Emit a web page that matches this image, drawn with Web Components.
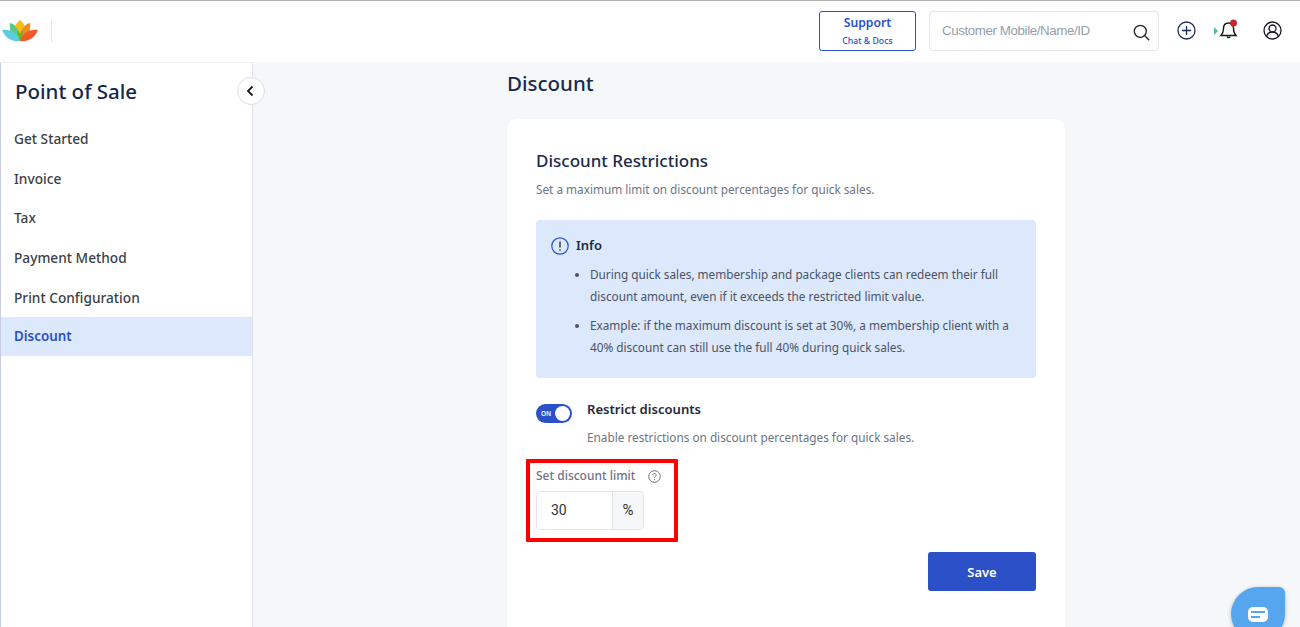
<!DOCTYPE html>
<html><head><meta charset="utf-8"><style>
html,body{margin:0;height:627px;overflow:hidden;background:#f6f7f9;font-family:"Noto Sans",sans-serif}
pos-app{display:block}
</style></head><body>
<pos-app></pos-app>
<script>
function def(name,html){customElements.define(name,class extends HTMLElement{constructor(){super();this.attachShadow({mode:'open'}).innerHTML=html}})}
def('top-bar',`<style>
:host{display:flex;align-items:center;height:62px;box-sizing:border-box;border-top:1px solid #b0b0b0;background:#fff;padding:0 18px 2px 2px}
.logo{width:36px;height:22px}
.sep{width:1px;height:22px;background:#e3e5e8;margin-left:13px}
.sp{flex:1}
.support{width:97px;height:40px;box-sizing:border-box;border:1px solid #2a50c8;border-radius:3px;display:flex;flex-direction:column;align-items:center;color:#2b50c8;margin-right:13px}
.support b{font:600 12.200px/16px "Noto Sans",sans-serif;margin-top:3px}
.support span{font:500 8.700px/12px "Noto Sans",sans-serif;margin-top:4px}
.search{width:230px;height:40px;box-sizing:border-box;border:1px solid #e2e4ea;border-radius:4px;display:flex;align-items:center;padding:0 12px;font:13.330px "Liberation Sans",sans-serif;letter-spacing:-.4px;color:#96a0ab;justify-content:space-between;margin-right:18px}
svg{display:block}
</style>
<svg class="logo" viewBox="0 0 36 22"><path d="M18 21C11 20 9 7 18 0c9 7 7 20 0 21z" fill="#f5bd16"/><path d="M18 21C9 21 7 9 8 3c5 1 10 6 10 18z" fill="#5dcb86"/><path d="M18 21C27 21 29 9 28 3c-5 1-10 6-10 18z" fill="#f28a26"/><path d="M18 21c-2-4-3-8-3-11 2 2 3 3 3 4 0-1 1-2 3-4 0 3-1 7-3 11z" fill="#6bb31e"/><path d="M18 21C10 22 3 18 0 10c8-1 15 2 18 11z" fill="#5ccde0"/><path d="M18 21c8 1 15-3 18-11-8-1-15 2-18 11z" fill="#ee5a2b"/></svg>
<div class="sep"></div><div class="sp"></div>
<div class="support"><b>Support</b><span>Chat &amp; Docs</span></div>
<div class="search"><span>Customer Mobile/Name/ID</span><svg width="17" height="17" viewBox="0 0 17 17" fill="none" stroke="#222" stroke-width="1.300" style="margin:3px -4px 0 0"><circle cx="7.300" cy="7.300" r="6"/><path d="M11.800 11.800l4.400 4.400"/></svg></div>
<svg width="19" height="19" viewBox="0 0 19 19" fill="none" stroke="#1d2b50" stroke-width="1.300"><circle cx="9.500" cy="9.500" r="8.500"/><path d="M9.500 5v9M5 9.500h9"/></svg>
<svg width="4" height="8" viewBox="0 0 4 8" style="margin-left:18px"><path d="M0 0l4 4-4 4z" fill="#4fc08a"/></svg>
<svg width="20" height="21" viewBox="0 0 20 21" fill="none" stroke="#15181d" stroke-width="1.400" style="margin:-3px 0 0 1px"><path d="M2 16.500c2-2 2.500-3.500 2.500-7 0-3.500 2-5.500 5-5.500s5 2 5 5.500c0 3.500.5 5 2.500 7z"/><path d="M8 17.500c.4 1.500 2.600 1.500 3 0"/><circle cx="14.500" cy="4" r="3.500" fill="#c1272d" stroke="none"/></svg>
<svg width="19" height="19" viewBox="0 0 19 19" fill="none" stroke="#15181d" stroke-width="1.300" style="margin-left:24px"><circle cx="9.500" cy="9.500" r="8.500"/><circle cx="9.500" cy="7.500" r="3.500"/><path d="M3.500 15.500c1-3 3.500-4.500 6-4.500s5 1.500 6 4.500"/></svg>`);
def('side-nav',`<style>
:host{display:block;width:253px;box-sizing:border-box;height:565px;background:#fff;border-right:1px solid #dfe2e8;border-left:1px solid #c6cde0;position:relative;flex:none;border-top:1px solid #eef0f3}
h1{margin:0;font:500 20.500px/28px "Noto Sans",sans-serif;color:#16264a;padding:14px 14px 0;height:56.200px;box-sizing:border-box}
.t{position:absolute;left:236px;top:14px;width:28px;height:28px;box-sizing:border-box;border:1px solid #dcdfe4;border-radius:50%;background:#fff;display:flex;align-items:center;justify-content:center;padding-right:2px}
</style><h1>Point of Sale</h1><slot></slot>
<div class="t"><svg width="8" height="12" viewBox="0 0 8 12" fill="none" stroke="#16181d" stroke-width="1.800"><path d="M6.500 1.500L2 6l4.500 4.500"/></svg></div>`);
def('nav-item',`<style>
:host{display:block;height:39.600px;padding-left:13px;font:500 13.700px/39px "Noto Sans",sans-serif;color:#3b3f46}
:host([active]){background:#dce8fc;color:#2b50c8;font-weight:600;font-size:13.400px;height:39px}
</style><slot></slot>`);
def('info-box',`<style>
:host{display:block;height:158px;box-sizing:border-box;background:#dce8fc;border-radius:4px;padding:15px 16px 0 15px;margin-top:22px}
.h{display:flex;align-items:center;gap:7px;font:600 13px/21px "Noto Sans",sans-serif;color:#1f2a44}
ul{margin:8px 0 0;padding:0 0 0 39px;font:11.770px/21.700px "Noto Sans",sans-serif;color:#4c5364}
::slotted(li){margin-bottom:8px}
</style><div class="h"><svg width="18" height="18" viewBox="0 0 18 18" fill="none" stroke="#2b50c8" stroke-width="1.200"><circle cx="9" cy="9" r="8.200"/><path d="M9 4.500v6M9 12.200v1.500" stroke="#1a2440" stroke-width="1.300"/></svg>Info</div><ul><slot></slot></ul>`);
def('toggle-row',`<style>
:host{display:flex;gap:15px;margin-top:22px}
.sw{width:36px;height:19px;background:#2b50c8;border-radius:10px;position:relative;margin-top:4px;flex:none}
.sw i{position:absolute;right:2px;top:2px;width:15px;height:15px;background:#fff;border-radius:50%}
.sw span{position:absolute;left:5px;top:5px;font:600 6.500px/9px "Noto Sans",sans-serif;color:#fff}
b{display:block;font:600 13.100px/18px "Noto Sans",sans-serif;color:#23293a}
p{margin:10px 0 0;font:11.770px/18px "Noto Sans",sans-serif;color:#6c7585}
</style><div class="sw"><span>ON</span><i></i></div><div><b>Restrict discounts</b><p>Enable restrictions on discount percentages for quick sales.</p></div>`);
def('limit-field',`<style>
:host{display:block;width:152px;height:83px;box-sizing:border-box;border:4px solid #f00;margin:13px 0 0 -10px;padding:4px 0 0 6px;border-radius:1px}
.l{display:flex;align-items:center;gap:13px;font:500 12px/18px "Noto Sans",sans-serif;color:#6c7585}
.i{display:flex;width:108px;height:39px;box-sizing:border-box;border:1px solid #e2e4ea;border-radius:4px;margin-top:6px;background:#fff;font:14px/37px Roboto,sans-serif;color:#333}
.v{width:76px;padding-left:14px;box-sizing:border-box;border-right:1px solid #e2e4ea}
.u{flex:1;background:#f6f7f9;text-align:center;border-radius:0 3px 3px 0;font-size:15px}
</style><div class="l">Set discount limit<svg width="13" height="13" viewBox="0 0 13 13" fill="none" stroke="#6c7585" stroke-width="1"><circle cx="6.500" cy="6.500" r="5.800"/><path d="M4.800 5.200c0-2.200 3.400-2.200 3.400-.1 0 1.300-1.700 1.300-1.700 2.700M6.500 9v1"/></svg></div>
<div class="i"><div class="v">30</div><div class="u">%</div></div>`);
def('discount-card',`<style>
:host{display:block;width:558px;height:520px;box-sizing:border-box;background:#fff;border-radius:10px;padding:30px 29px 0;margin-top:22px}
h2{margin:0;font:500 17px/24px "Noto Sans",sans-serif;color:#1b2a4a}
p{margin:7px 0 0;font:11.770px/18px "Noto Sans",sans-serif;color:#6c7585}
button{display:block;margin:10px 0 0 392px;width:108px;height:39px;background:#2b50c8;color:#fff;border:0;border-radius:3px;font:600 13px "Noto Sans",sans-serif}
</style><h2>Discount Restrictions</h2><p>Set a maximum limit on discount percentages for quick sales.</p><slot></slot><button>Save</button>`);
def('main-pane',`<style>
:host{display:block;flex:1;padding:7px 0 0 254px;position:relative;overflow:hidden}
h1{margin:0;font:500 20.500px/28px "Noto Sans",sans-serif;color:#1b2a4a}
</style><h1>Discount</h1><slot></slot>`);
def('chat-fab',`<style>
:host{position:absolute;left:1231px;top:587px;width:54px;height:54px;background:#55a6ee;border-radius:50% 6px 50% 50%;box-shadow:0 1px 4px rgba(0,0,0,.25)}
i{position:absolute;left:17px;top:20px;width:20px;height:15px;background:#fff;border-radius:5px}
i:before,i:after{content:"";position:absolute;left:3px;height:1.500px;background:#55a6ee}
i:before{top:4px;width:14px}i:after{top:9px;width:9px}
</style><i></i>`);
def('pos-app',`<style>
:host{display:block;height:627px;position:relative}
.b{display:flex}
</style><top-bar></top-bar><div class="b"><side-nav>
<nav-item>Get Started</nav-item><nav-item>Invoice</nav-item><nav-item>Tax</nav-item><nav-item>Payment Method</nav-item><nav-item>Print Configuration</nav-item><nav-item active>Discount</nav-item>
</side-nav><main-pane><discount-card>
<info-box><li>During quick sales, membership and package clients can redeem their full discount amount, even if it exceeds the restricted limit value.</li><li>Example: if the maximum discount is set at 30%, a membership client with a 40% discount can still use the full 40% during quick sales.</li></info-box>
<toggle-row></toggle-row><limit-field></limit-field>
</discount-card></main-pane></div><chat-fab></chat-fab>`);
</script></body></html>
